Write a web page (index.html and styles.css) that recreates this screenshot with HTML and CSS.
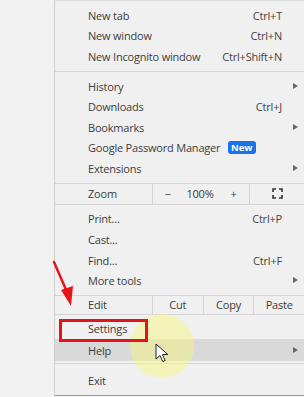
FILE: index.html
```html
<!DOCTYPE html>
<html lang="en">
<head>
    <meta charset="UTF-8">
    <meta name="viewport" content="width=device-width, initial-scale=1.0">
    <title>Chrome menu</title>
    <link rel="stylesheet" href="styles.css">
</head>
<body>
    <div class="page">
        <div class="side"></div>

        <div class="menu">
            <div class="group">
                <div class="item"><span>New tab</span><span class="key">Ctrl+T</span></div>
                <div class="item"><span>New window</span><span class="key">Ctrl+N</span></div>
                <div class="item"><span>New Incognito window</span><span class="key">Ctrl+Shift+N</span></div>
            </div>

            <div class="group">
                <div class="item"><span>History</span><span class="sub"></span></div>
                <div class="item"><span>Downloads</span><span class="key">Ctrl+J</span></div>
                <div class="item"><span>Bookmarks</span><span class="sub"></span></div>
                <div class="item"><span>Google Password Manager <span class="badge">New</span></span></div>
                <div class="item"><span>Extensions</span><span class="sub"></span></div>
            </div>

            <div class="split zoom-row">
                <span class="split-label">Zoom</span>
                <div class="cells">
                    <span class="cell minus">−</span>
                    <span class="cell pct">100%</span>
                    <span class="cell plus">+</span>
                    <span class="cell full">
                        <svg width="11" height="11" viewBox="0 0 11 11">
                            <path d="M1 4V1h3M7 1h3v3M10 7v3H7M4 10H1V7" fill="none" stroke="#333" stroke-width="1.6"/>
                        </svg>
                    </span>
                </div>
            </div>

            <div class="group">
                <div class="item"><span>Print...</span><span class="key">Ctrl+P</span></div>
                <div class="item"><span>Cast...</span></div>
                <div class="item"><span>Find...</span><span class="key">Ctrl+F</span></div>
                <div class="item"><span>More tools</span><span class="sub"></span></div>
            </div>

            <div class="split edit-row">
                <span class="split-label">Edit</span>
                <div class="cells">
                    <span class="cell">Cut</span>
                    <span class="cell">Copy</span>
                    <span class="cell">Paste</span>
                </div>
            </div>

            <div class="group tail">
                <div class="item tall"><span>Settings</span></div>
                <div class="item tall hover"><span>Help</span><span class="sub"></span></div>
            </div>

            <div class="group last">
                <div class="item tall"><span>Exit</span></div>
            </div>
        </div>
    </div>

    <!-- screen-recording annotations -->
    <div class="glow"></div>
    <div class="mark"></div>
    <svg class="arrow" width="40" height="60" viewBox="0 0 40 60">
        <line x1="3" y1="2" x2="16" y2="32" stroke="#e8141c" stroke-width="2.5" stroke-linecap="round"/>
        <polygon points="10,30 22,26 20,46" fill="#e8141c"/>
    </svg>
    <svg class="cursor" width="14" height="20" viewBox="0 0 14 20">
        <path d="M1 1v15l4-3.5 2.8 6 2.4-1-2.8-6h5.4z" fill="#fff" stroke="#222" stroke-width="1"/>
    </svg>
</body>
</html>
```

FILE: styles.css
```css
* {
    margin: 0;
    padding: 0;
    box-sizing: border-box;
}

body {
    font-family: 'Open Sans', 'Noto Sans', sans-serif;
    font-size: 11px;
    letter-spacing: -0.2px;
    color: #3c3c3c;
    background: #f1f1f1;
    width: 304px;
    height: 397px;
    overflow: hidden;
    position: relative;
}

.page {
    display: flex;
    height: 100%;
}

.side {
    width: 54px;
    background: #f2f2f2;
}

.menu {
    flex: 1;
    height: 396px;
    background: #f0f0f0;
    border-left: 1px solid #cfcfcf;
    border-top: 1px solid #dcdcdc;
    border-bottom: 1px solid #9a9a9a;
    display: flex;
    flex-direction: column;
}

.group {
    padding: 4px 0;
    border-bottom: 1px solid #d6d6d6;
}

.item {
    height: 20.6px;
    display: flex;
    align-items: center;
    justify-content: space-between;
    padding-left: 33px;
    padding-right: 22px;
    position: relative;
}

.item.tall {
    height: 22px;
}

.item.hover {
    background: #d9d9d9;
}

.key {
    color: #444;
}

.sub {
    position: absolute;
    right: 6px;
    top: 50%;
    margin-top: -3.5px;
    width: 0;
    height: 0;
    border-top: 3.5px solid transparent;
    border-bottom: 3.5px solid transparent;
    border-left: 5px solid #666;
}

.badge {
    display: inline-block;
    background: #1a73e8;
    color: #fff;
    font-weight: 700;
    font-size: 9.5px;
    letter-spacing: 0;
    line-height: 13px;
    padding: 0 3px;
    border-radius: 3px;
    margin-left: 5px;
    vertical-align: 1px;
}

.split {
    display: flex;
    align-items: stretch;
    border-bottom: 1px solid #d6d6d6;
}

.zoom-row {
    height: 23px;
}

.edit-row {
    height: 21px;
}

.split-label {
    width: 97px;
    padding-left: 33px;
    display: flex;
    align-items: center;
}

.cells {
    flex: 1;
    display: flex;
}

.cell {
    display: flex;
    align-items: center;
    justify-content: center;
    border-left: 1px solid #d6d6d6;
    flex: 1;
}

.zoom-row .cell {
    border-left: none;
}

.zoom-row .cell.minus {
    border-left: 1px solid #d6d6d6;
    flex: 0 0 30px;
}

.zoom-row .cell.pct {
    flex: 0 0 36px;
}

.zoom-row .cell.plus {
    flex: 0 0 31px;
}

.zoom-row .cell.full {
    border-left: 1px solid #d6d6d6;
    flex: 1;
}

.tail {
    padding: 2px 0;
}

.last {
    border-bottom: none;
    padding-top: 5px;
}

.glow {
    position: absolute;
    left: 130px;
    top: 314px;
    width: 64px;
    height: 64px;
    border-radius: 50%;
    background: rgba(246, 246, 120, 0.45);
}

.mark {
    position: absolute;
    left: 59px;
    top: 319px;
    width: 89px;
    height: 23px;
    border: 3px solid #e0141c;
}

.arrow {
    position: absolute;
    left: 51px;
    top: 260px;
}

.cursor {
    position: absolute;
    left: 155px;
    top: 343px;
}
```
